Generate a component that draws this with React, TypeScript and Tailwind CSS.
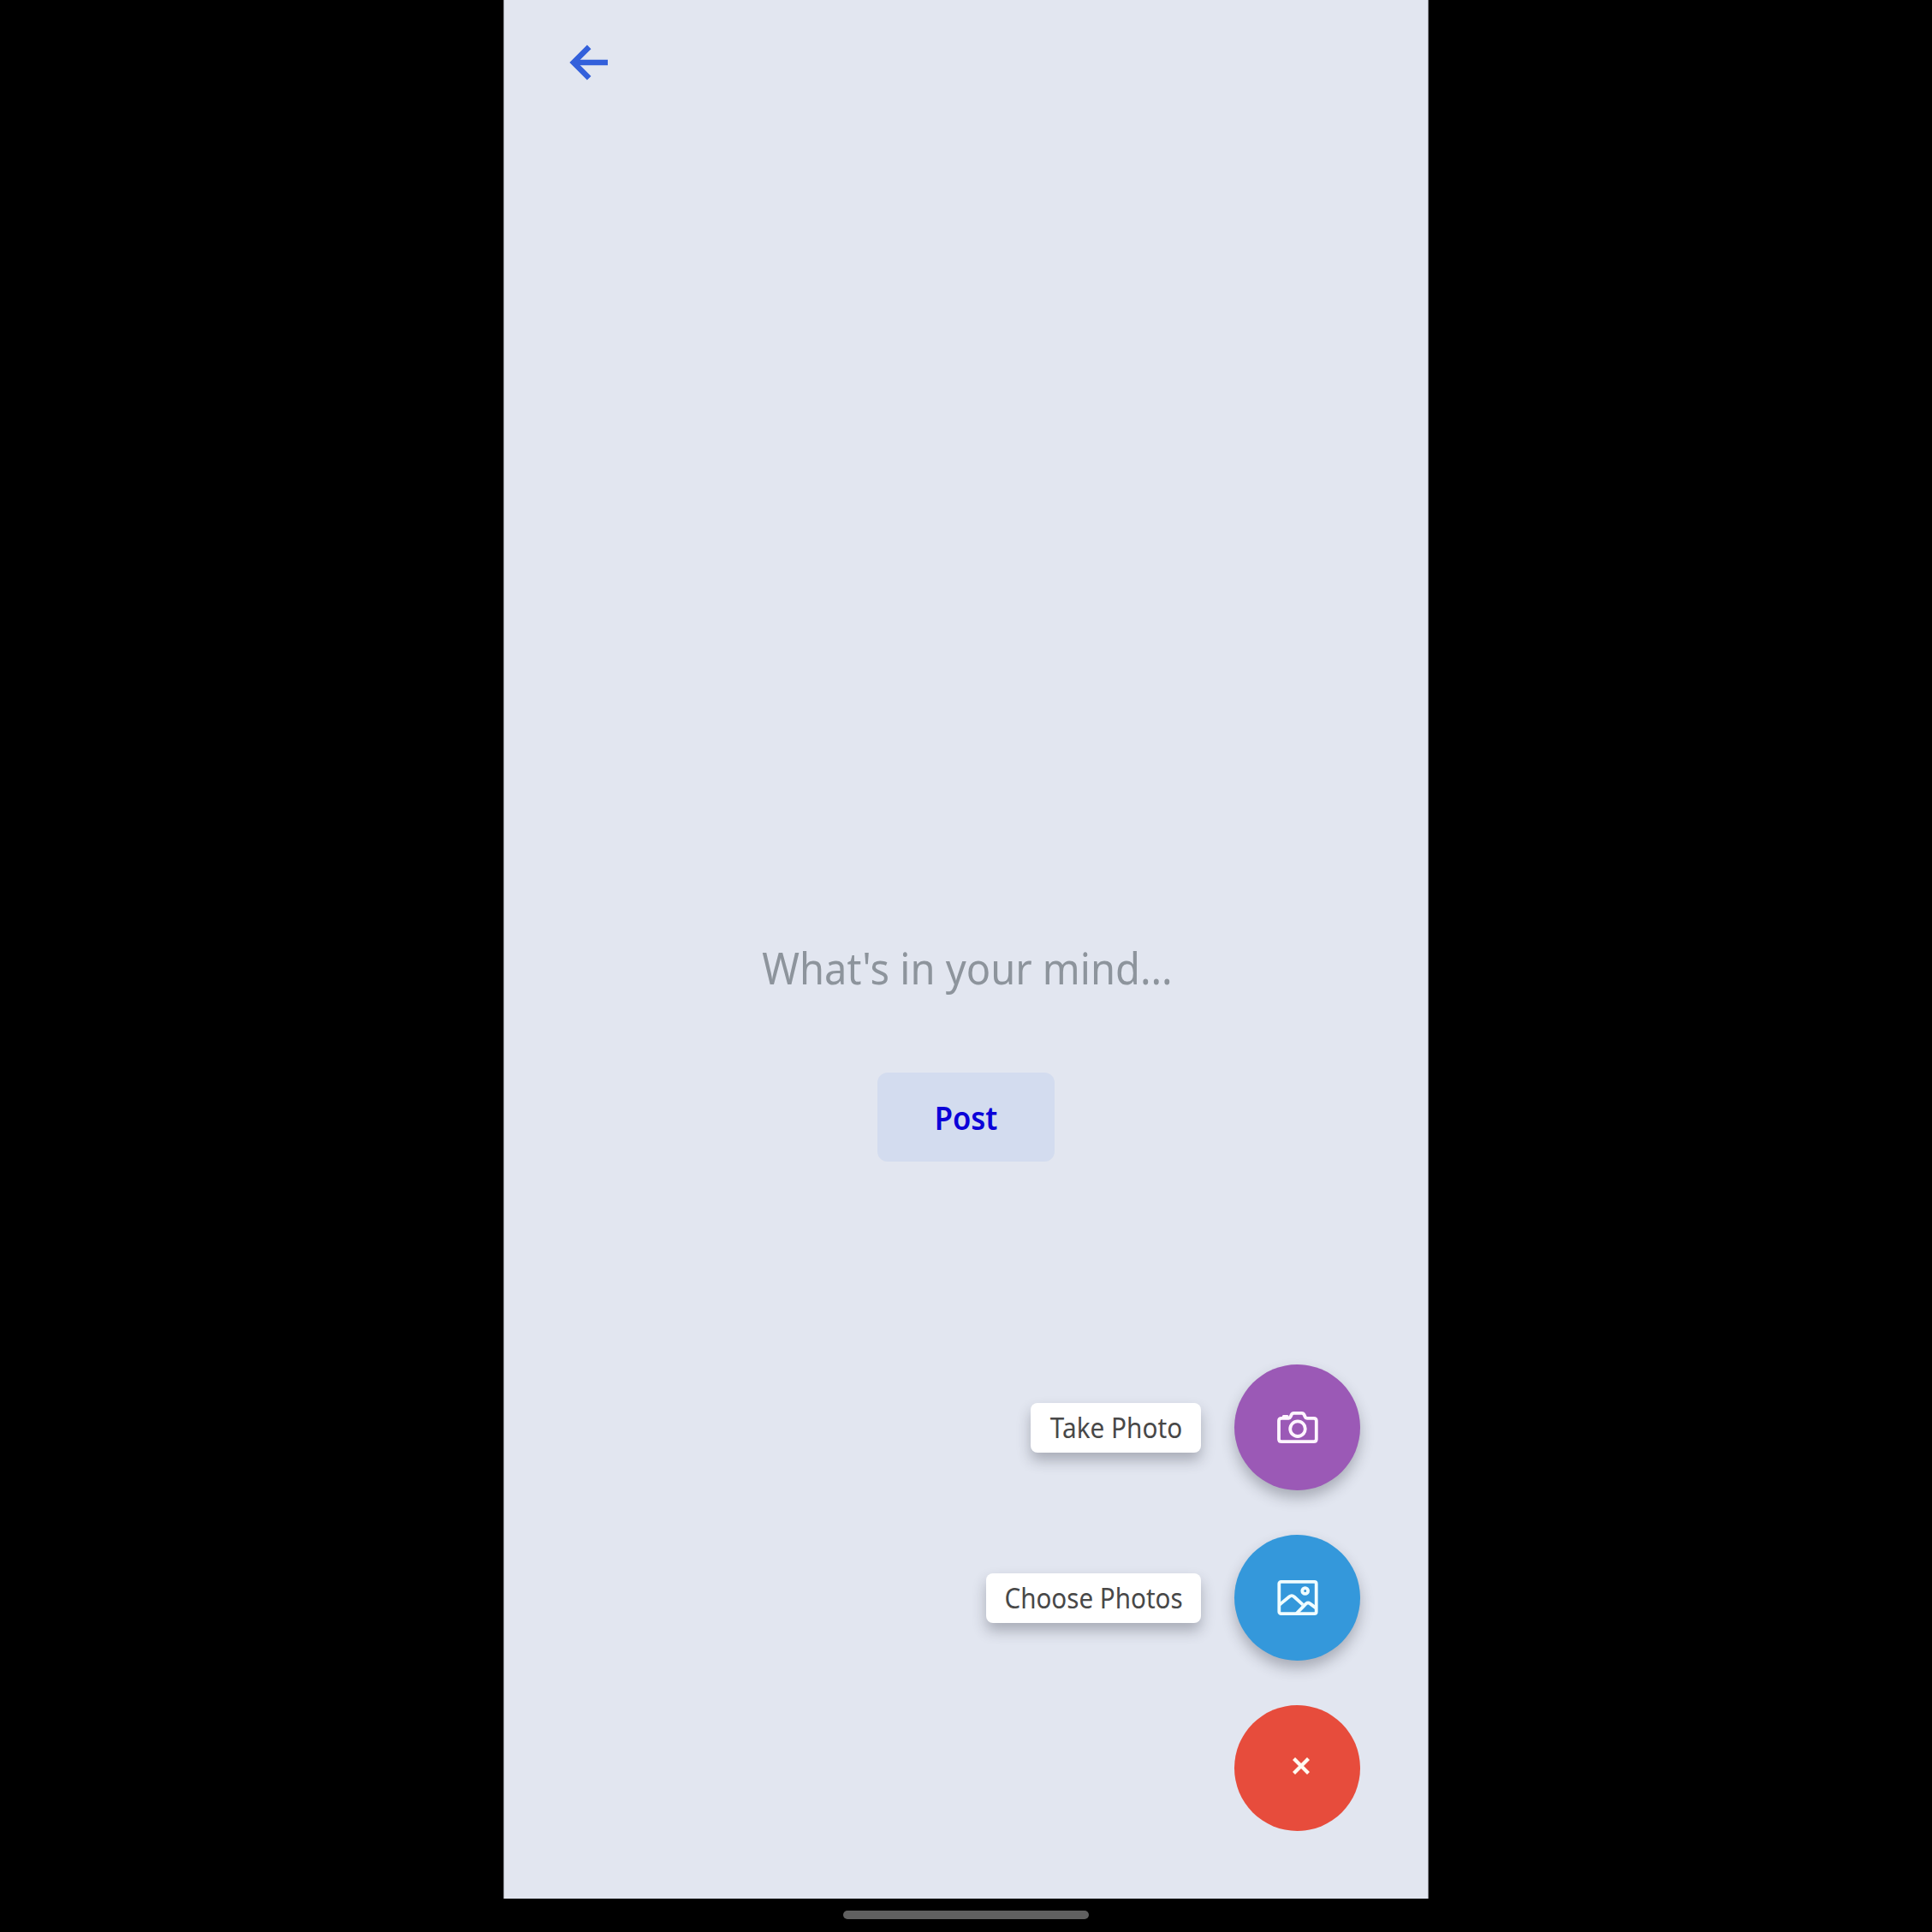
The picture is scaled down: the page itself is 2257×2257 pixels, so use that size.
import type { ReactNode } from "react";

function BackArrow() {
  return (
    <svg width="46" height="42" viewBox="0 0 46 42" fill="none" stroke="#3360db" strokeWidth="6.5">
      <path d="M45 21H6" />
      <path d="M23.200 2.900 5 21l18.200 18.200" />
    </svg>
  );
}

function CameraIcon() {
  return (
    <svg width="48" height="40" viewBox="0 0 48 40" fill="none" stroke="#fff5ff" strokeWidth="3.8" strokeLinejoin="round">
      <path d="M5.100 8.800h8.300c1.200 0 1.800-.8 2.300-1.900l.9-2c.6-1.300 1.400-2 2.800-2h9.400c1.400 0 2.200.7 2.800 2l.9 2c.5 1.100 1.100 1.900 2.300 1.900h7.900c1.800 0 3.100 1.200 3.100 3v21.400c0 1.800-1.300 3-3.100 3H5.100c-1.800 0-3.100-1.200-3.100-3V11.800c0-1.800 1.300-3 3.100-3Z" />
      <circle cx="24" cy="21.200" r="8.800" />
      <path d="M7.400 6.400h4.600" strokeLinecap="round" strokeWidth="3" />
    </svg>
  );
}

function GalleryIcon() {
  return (
    <svg width="48" height="42" viewBox="0 0 48 42" fill="none" stroke="#f0fdff" strokeWidth="3.8" strokeLinejoin="round">
      <rect x="2.300" y="1.900" width="43.400" height="37.200" rx="2.200" />
      <circle cx="32.700" cy="12.500" r="3.400" />
      <path d="M2.800 28.600 14.200 19.200q2.900-2.300 5.800.3L30 28.600" />
      <path d="M22.500 39 33.800 27.400q2.300-1.900 4.600 0L45.500 32.600" />
    </svg>
  );
}

function CloseIcon() {
  return (
    <svg width="20" height="20" viewBox="0 0 20 20" fill="none" stroke="#fffaf0" strokeWidth="4.3">
      <path d="M1.500 1.500l17 17M18.500 1.500l-17 17" />
    </svg>
  );
}

function ActionRow({ label, children }: { label: ReactNode; children: ReactNode }) {
  return (
    <div className="flex items-center gap-[39px]">
      {label}
      {children}
    </div>
  );
}

export default function App() {
  return (
    <div className="flex h-[2257px] w-[2257px] flex-col items-center overflow-hidden bg-black font-['Noto_Sans',sans-serif]">
      <main className="flex h-[2218px] w-[1081px] flex-col border-x border-[#8a8b91] bg-[#e2e6f0]">
        <header className="flex h-[145px] shrink-0 items-center pl-[76px]">
          <button aria-label="Back">
            <BackArrow />
          </button>
        </header>

        <section className="flex flex-col items-center pt-[950px]">
          <div className="flex h-[70px] items-center justify-center pl-[2px]">
            <span className="scale-x-[0.922] whitespace-nowrap text-[51px] leading-[70px] text-[#8d949c]">What's in your mind...</span>
          </div>
          <button className="mt-[88px] flex h-[104px] w-[207px] items-center justify-center rounded-xl bg-[#d3dcef]">
            <span className="scale-x-[0.91] text-[38px] font-semibold leading-none text-[#0b00d8]">Post</span>
          </button>
        </section>

        <section className="mt-auto flex flex-col items-end gap-[52px] pr-[79px] pb-[79px]">
          <ActionRow
            label={
              <div className="flex h-[58px] w-[199px] items-center justify-center rounded-lg bg-white pl-px shadow-[0_9px_16px_rgba(50,54,66,0.32)]">
                <span className="scale-x-[0.93] whitespace-nowrap text-[32px] leading-none text-[#484848]">Take Photo</span>
              </div>
            }
          >
            <button aria-label="Take Photo" className="flex size-[147px] items-center justify-center rounded-full bg-[#9b59b6] shadow-[0_9px_16px_rgba(50,54,66,0.32)]">
              <CameraIcon />
            </button>
          </ActionRow>
          <ActionRow
            label={
              <div className="flex h-[58px] w-[251px] items-center justify-center rounded-lg bg-white shadow-[0_9px_16px_rgba(50,54,66,0.32)]">
                <span className="scale-x-[0.925] whitespace-nowrap text-[32px] leading-none text-[#484848]">Choose Photos</span>
              </div>
            }
          >
            <button aria-label="Choose Photos" className="flex size-[147px] items-center justify-center rounded-full bg-[#3498db] shadow-[0_9px_16px_rgba(50,54,66,0.32)]">
              <GalleryIcon />
            </button>
          </ActionRow>
          <button aria-label="Close" className="flex size-[147px] items-center justify-center rounded-full bg-[#e74c3c] pb-[5px] pl-[8px]">
            <CloseIcon />
          </button>
        </section>
      </main>
      <footer className="flex h-[39px] w-full justify-center pt-[14px]">
        <div className="h-[10px] w-[287px] rounded-full bg-[#606060]" />
      </footer>
    </div>
  );
}
